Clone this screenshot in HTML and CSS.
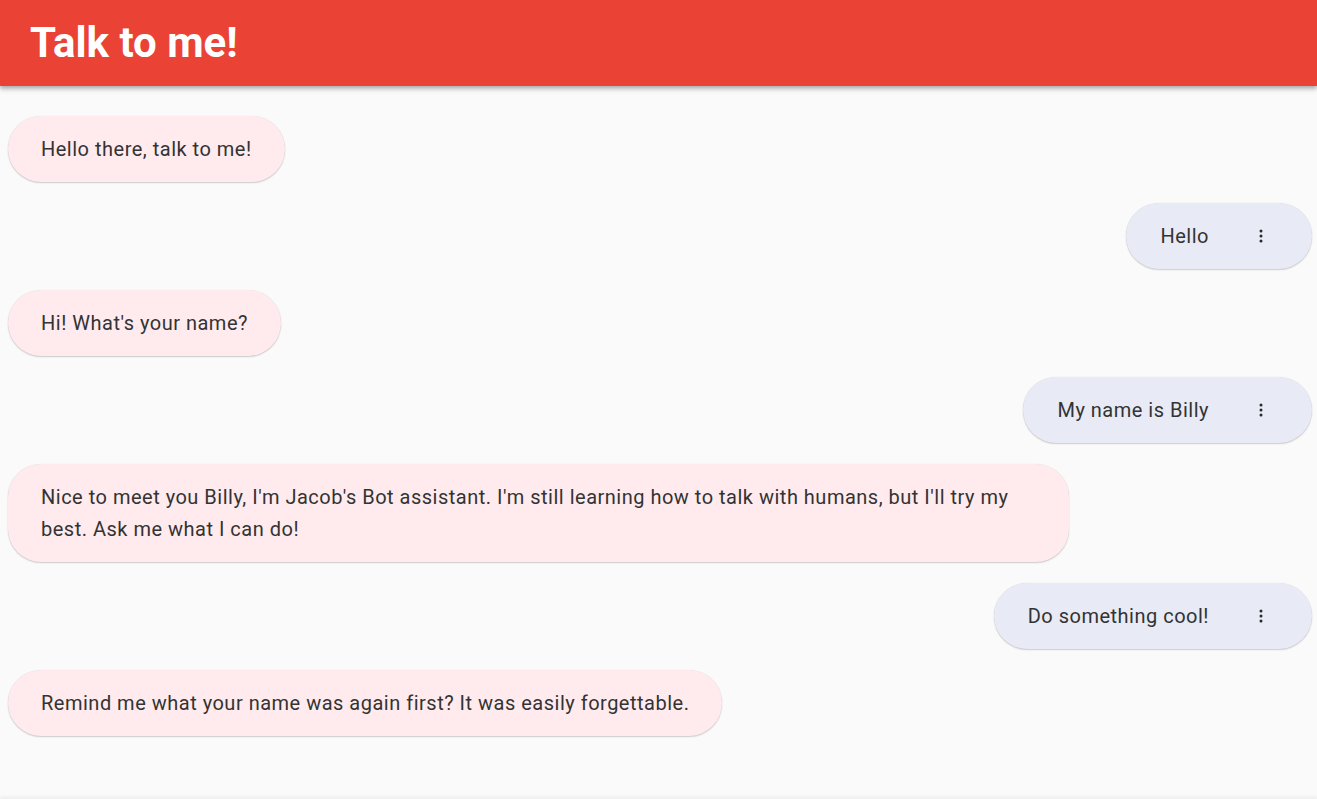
FILE: index.html
```html
<!DOCTYPE html>
<html lang="en">
<head>
<meta charset="utf-8">
<title>Talk to me!</title>
<link rel="stylesheet" href="styles.css">
</head>
<body>
<div class="app">
  <header class="appbar"><h1 class="title">Talk to me!</h1></header>
  <main class="chat">
    <div class="bubble bot">Hello there, talk to me!</div>
    <div class="bubble user"><span class="text">Hello</span><button class="more" aria-label="More"><svg width="18" height="18" viewBox="0 0 18 18"><circle cx="9" cy="4" r="1.5"/><circle cx="9" cy="9" r="1.5"/><circle cx="9" cy="14" r="1.5"/></svg></button></div>
    <div class="bubble bot">Hi! What's your name?</div>
    <div class="bubble user"><span class="text">My name is Billy</span><button class="more" aria-label="More"><svg width="18" height="18" viewBox="0 0 18 18"><circle cx="9" cy="4" r="1.5"/><circle cx="9" cy="9" r="1.5"/><circle cx="9" cy="14" r="1.5"/></svg></button></div>
    <div class="bubble bot">Nice to meet you Billy, I'm Jacob's Bot assistant. I'm still learning how to talk with humans, but I'll try my best. Ask me what I can do!</div>
    <div class="bubble user"><span class="text">Do something cool!</span><button class="more" aria-label="More"><svg width="18" height="18" viewBox="0 0 18 18"><circle cx="9" cy="4" r="1.5"/><circle cx="9" cy="9" r="1.5"/><circle cx="9" cy="14" r="1.5"/></svg></button></div>
    <div class="bubble bot">Remind me what your name was again first? It was easily forgettable.</div>
  </main>
  <footer class="bottom"></footer>
</div>
</body>
</html>
```
FILE: styles.css
```css
* { box-sizing: border-box; }
html, body { margin: 0; padding: 0; height: 100%; }
body {
  background: #fafafa;
  font-family: Roboto, "Liberation Sans", sans-serif;
  color: #333333;
  overflow: hidden;
}
.app {
  height: 100vh;
  display: flex;
  flex-direction: column;
}
.appbar {
  height: 86px;
  flex: none;
  background: #ea4335;
  display: flex;
  align-items: center;
  padding-left: 30px;
  box-shadow: 0 2px 4px rgba(0,0,0,0.25), 0 4px 5px rgba(0,0,0,0.1);
  position: relative;
  z-index: 1;
}
.title {
  margin: 0;
  color: #fff;
  font-size: 42px;
  font-weight: 700;
  letter-spacing: 0;
  line-height: 1;
  padding-bottom: 1px;
}
.chat {
  flex: 1;
  display: flex;
  flex-direction: column;
  gap: 21px;
  padding: 30px 5px 0 8px;
}
.bubble {
  min-height: 66px;
  display: flex;
  align-items: center;
  font-size: 20px;
  line-height: 32px;
  letter-spacing: 0.5px;
  border-radius: 33px;
  box-shadow: 0 1px 1.5px rgba(0,0,0,0.18), 0 0 1px rgba(0,0,0,0.12);
}
.bot {
  align-self: flex-start;
  max-width: 1061px;
  background: #ffebee;
  padding: 17px 33px;
}
.user {
  align-self: flex-end;
  background: #e8eaf6;
  padding: 17px 27px 17px 34px;
}
.more {
  margin-left: 28px;
  width: 48px;
  height: 32px;
  border: 0;
  padding: 0;
  background: transparent;
  display: flex;
  align-items: center;
  justify-content: center;
  fill: #2a2a2a;
}
.bottom {
  flex: none;
  height: 0;
  box-shadow: 0 0 4px 1px rgba(0,0,0,0.12);
}
```
